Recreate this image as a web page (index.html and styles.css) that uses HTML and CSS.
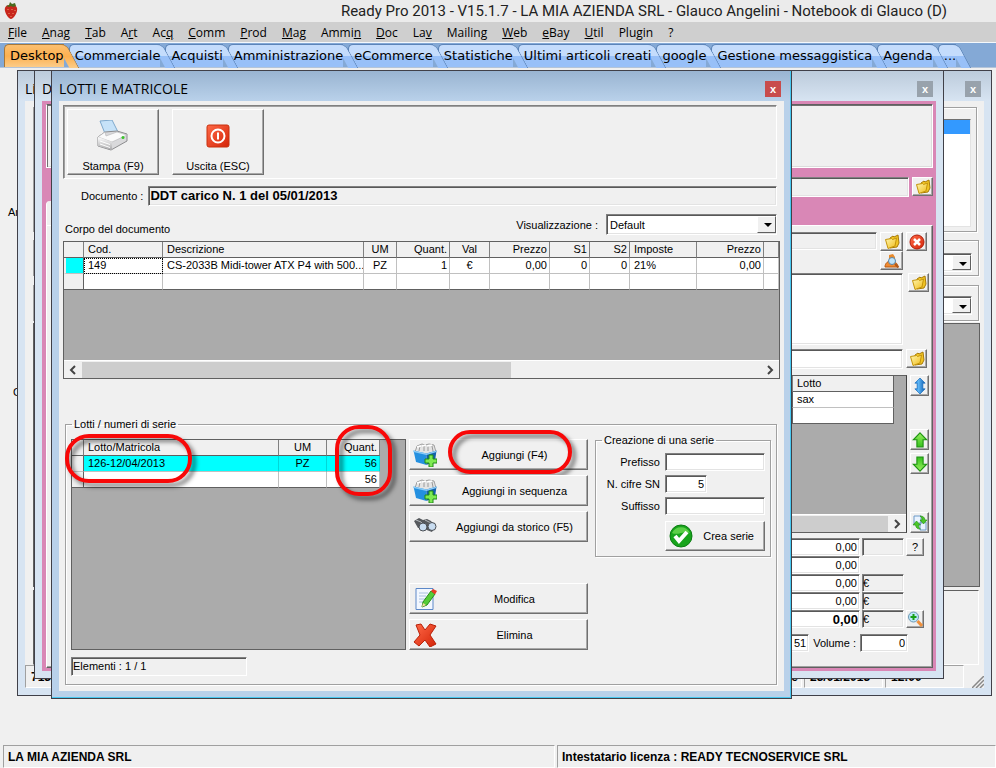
FILE: index.html
```html
<!DOCTYPE html>
<html lang="it">
<head>
  <meta charset="UTF-8">
  <meta name="viewport" content="width=device-width, initial-scale=1.0">
  <title>Ready Pro 2013</title>
  <link rel="stylesheet" href="styles.css">
</head>
<body>
  <!-- Shared icons -->
  <svg class="icon-defs" aria-hidden="true">
    <defs>
      <linearGradient id="gold" x1="0" y1="0" x2="1" y2="1"><stop offset="0" stop-color="#fff6b0"/><stop offset="1" stop-color="#f0bc18"/></linearGradient>
      <linearGradient id="blue" x1="0" y1="0" x2="1" y2="0"><stop offset="0" stop-color="#1d86e0"/><stop offset=".35" stop-color="#5cb4f4"/><stop offset="1" stop-color="#0d5cb0"/></linearGradient>
      <linearGradient id="green" x1="0" y1="0" x2="0" y2="1"><stop offset="0" stop-color="#9af060"/><stop offset="1" stop-color="#35c21c"/></linearGradient>
      <linearGradient id="red" x1="0" y1="0" x2="1" y2="1"><stop offset="0" stop-color="#ff6a48"/><stop offset="1" stop-color="#d42408"/></linearGradient>
      <linearGradient id="grey" x1="0" y1="0" x2="0" y2="1"><stop offset="0" stop-color="#ffffff"/><stop offset="1" stop-color="#a9a9ab"/></linearGradient>
    </defs>
    <symbol id="folder" viewBox="0 0 16 16">
      <path d="M6 4l3-2 1 1 4-2 1 8-2 4-7 1z" fill="#f0c424" stroke="#a87a08"/>
      <path d="M1.500 5.500l2.500 9 7-2.500 1.500-8-4 1.500-1-1z" fill="url(#gold)" stroke="#c4940c"/>
    </symbol>
    <symbol id="crate" viewBox="0 0 24 24">
      <path d="M2 9l2-6 5-2 3 1 4-1 5 1 2 7-10 3z" fill="#e4e4e4" stroke="#8c8c8c" stroke-width=".8"/>
      <path d="M7 3l-1 5M11 2v6M15 2v6M19 3l1 5" stroke="#9a9a9a" fill="none"/>
      <path d="M4 4l4-1M9 3l4-1M14 3l5-1" stroke="#fff" stroke-width="1.500" fill="none"/>
      <path d="M.500 7.500l13 3V22L3 19z" fill="#2490e0"/>
      <path d="M13.500 10.500l10-3L22 18l-8.500 4z" fill="#1260ac"/>
      <path d="M.500 7.500l13 3 10-3v1.500l-10 3-13-3z" fill="#8accf8"/>
      <path d="M16 12h4v4h4v4h-4v4h-4v-4h-4v-4h4z" fill="#7eea52" stroke="#1e8a16"/>
    </symbol>
    <symbol id="arrow" viewBox="0 0 14 14">
      <path d="M7 .800l5.800 6H9.700v6.200H4.300V6.800H1.200z" fill="url(#green)" stroke="#1e9412"/>
    </symbol>
  </svg>

  <!-- Title bar -->
  <header class="titlebar">
    <svg class="logo" viewBox="0 0 14 18">
      <path d="M7 4C3 2 0 5 1 9c1 4 4 8 6 8s5-4 6-8c1-4-2-7-6-5z" fill="#c8261c"/>
      <path d="M4 7v1M8 7v1M11 8v1M5 11v1M9 11v1M7 14v1" stroke="#f09a70" fill="none"/>
      <path d="M2 4l3-1 1-3 2 2 3-1 1 3-3 1-2-1-2 1z" fill="#4b6a1e"/>
    </svg>
    <span>Ready Pro 2013 - V15.1.7 - LA MIA AZIENDA SRL - Glauco Angelini - Notebook di Glauco (D)</span>
  </header>

  <!-- Menu -->
  <nav class="menubar">
    <a href="#"><u>F</u>ile</a>
    <a href="#"><u>A</u>nag</a>
    <a href="#"><u>T</u>ab</a>
    <a href="#">A<u>r</u>t</a>
    <a href="#">Ac<u>q</u></a>
    <a href="#"><u>C</u>omm</a>
    <a href="#"><u>P</u>rod</a>
    <a href="#"><u>M</u>ag</a>
    <a href="#">Ammi<u>n</u></a>
    <a href="#"><u>D</u>oc</a>
    <a href="#">La<u>v</u></a>
    <a href="#">Mailin<u>g</u></a>
    <a href="#"><u>W</u>eb</a>
    <a href="#"><u>e</u>Bay</a>
    <a href="#"><u>U</u>til</a>
    <a href="#">Plugin</a>
    <a href="#">?</a>
  </nav>

  <!-- Tabs -->
  <nav class="tabs">
    <button class="tab active"><span>Desktop</span></button>
    <button class="tab"><span>Commerciale</span></button>
    <button class="tab"><span>Acquisti</span></button>
    <button class="tab"><span>Amministrazione</span></button>
    <button class="tab"><span>eCommerce</span></button>
    <button class="tab"><span>Statistiche</span></button>
    <button class="tab"><span>Ultimi articoli creati</span></button>
    <button class="tab"><span>google</span></button>
    <button class="tab"><span>Gestione messaggistica</span></button>
    <button class="tab"><span>Agenda</span></button>
    <button class="tab"><span>...</span></button>
  </nav>

  <main class="desktop">
    <span class="desk-label desk-label-1">Ar</span>
    <span class="desk-label desk-label-2">C</span>

    <!-- Back window: list -->
    <section class="window window-list">
      <div class="window-title"><h2>Li</h2><button class="close" aria-label="Chiudi">x</button></div>
      <div class="window-body list-body">
        <div class="box box-list"><div class="listbox"><div class="selected"></div></div></div>
        <div class="box box-combo"><span class="combo"><select aria-label="Filtro"><option></option></select></span></div>
        <div class="box box-combo"><span class="combo"><select aria-label="Ordine"><option></option></select></span></div>
        <div class="list-grid"></div>
        <div class="list-panel"></div>
        <div class="list-status">
          <span class="cell grow"><b>713</b><b>Utente</b></span>
          <span class="cell date"><b>23/01/2013</b></span>
          <span class="cell time"><b>12:00</b></span>
          <svg class="grip" viewBox="0 0 12 12"><path d="M0 12L12 0M4 12l8-8M8 12l4-4" stroke="#888" stroke-width="1.500"/></svg>
        </div>
      </div>
    </section>

    <!-- Middle window: document -->
    <section class="window window-doc">
      <div class="window-title"><h2>D</h2><button class="close" aria-label="Chiudi">x</button></div>
      <div class="window-body doc-body">
        <div class="doc-toolbar"></div>
        <div class="doc-row doc-head">
          <input class="field flat" type="text" aria-label="Intestatario" readonly>
          <button class="btn" aria-label="Apri"><svg><use href="#folder"/></svg></button>
        </div>
        <div class="doc-tab"></div>
        <div class="doc-panel">
          <div class="doc-row pad-5">
            <input class="field flat" type="text" aria-label="Cliente" readonly>
            <button class="btn wide" aria-label="Apri cliente"><svg><use href="#folder"/></svg></button>
            <button class="btn" aria-label="Rimuovi"><svg viewBox="0 0 16 16"><circle cx="8" cy="8" r="7" fill="url(#red)" stroke="#b01c08"/><path d="M5 5l6 6M11 5l-6 6" stroke="#fff" stroke-width="2.500"/></svg></button>
          </div>
          <div class="doc-row pad-29">
            <button class="btn wide" aria-label="Cerca cliente"><svg viewBox="0 0 16 16"><path d="M5 2l4-1 2 3v4H5z" fill="#e88a2c"/><path d="M1 14c0-4 3-6 6-6s7 2 7 6z" fill="#f08a30" stroke="#b85810"/><circle cx="8" cy="8" r="3.500" fill="#bfe4fa" stroke="#5a84a4"/><path d="M11 11l3.500 3.500" stroke="#b05818" stroke-width="2"/></svg></button>
          </div>
          <div class="doc-row notes pad-3">
            <textarea class="field" aria-label="Note"></textarea>
            <button class="btn" aria-label="Apri note"><svg><use href="#folder"/></svg></button>
          </div>
          <div class="doc-row dest pad-5">
            <input class="field" type="text" aria-label="Destinazione">
            <button class="btn" aria-label="Apri destinazione"><svg><use href="#folder"/></svg></button>
          </div>
          <div class="doc-row lines pad-3">
            <div class="doc-grid">
              <table>
                <thead><tr><th></th><th>Lotto</th></tr></thead>
                <tbody><tr><td></td><td>sax</td></tr><tr><td></td><td></td></tr></tbody>
              </table>
              <div class="scrollbar"><span class="thumb"></span><svg viewBox="0 0 8 10"><path d="M2 1l4 4-4 4" fill="none" stroke="#444" stroke-width="2"/></svg></div>
            </div>
            <div class="doc-side">
              <button class="btn" aria-label="Ridimensiona"><svg viewBox="0 0 14 14"><path d="M7 0l4.500 4.500H9.500v5h2L7 14 2.500 9.500h2v-5h-2z" fill="url(#blue)" stroke="#1468b8" stroke-width=".6"/></svg></button>
              <button class="btn up" aria-label="Sposta su"><svg><use href="#arrow"/></svg></button>
              <button class="btn" aria-label="Sposta giù"><svg class="flip"><use href="#arrow"/></svg></button>
              <button class="btn last" aria-label="Aggiorna"><svg viewBox="0 0 16 16"><path d="M2 1h7v8H2zM8 7h6v8H8z" fill="#e9f3ff" stroke="#6c9ac8"/><path d="M4.500 6l4 4H6.500c0 2 .500 3 2 4-3 0-4.500-1-5-4H1z" fill="#4cc828" stroke="#1e8a12" stroke-width=".6"/><path d="M11.500 9l-3.500-4h2c0-2-.500-3-2-4 3 0 4.500 1 5 4h2z" fill="#4cc828" stroke="#1e8a12" stroke-width=".6"/></svg></button>
            </div>
          </div>
          <div class="totals">
            <input class="field" type="text" value="0,00" aria-label="Spese"><input class="field flat" type="text" aria-label="Valuta spese"><button class="btn" aria-label="Aiuto">?</button>
            <input class="field" type="text" value="0,00" aria-label="Sconto"><span></span><span></span>
            <input class="field" type="text" value="0,00" aria-label="Imponibile"><input class="field flat" type="text" value="€" aria-label="Valuta imponibile"><span></span>
            <input class="field" type="text" value="0,00" aria-label="Imposta"><input class="field flat" type="text" value="€" aria-label="Valuta imposta"><span></span>
            <input class="field strong" type="text" value="0,00" aria-label="Totale"><input class="field flat" type="text" value="€" aria-label="Valuta totale"><button class="btn" aria-label="Dettaglio totale"><svg viewBox="0 0 16 16"><circle cx="6.500" cy="6" r="5" fill="#bfe8fa" stroke="#6c98b4"/><path d="M6.500 3v6M3.500 6h6" stroke="#18a018" stroke-width="2"/><path d="M10.500 10l4.500 5" stroke="#f0903c" stroke-width="3"/></svg></button>
          </div>
          <div class="doc-row volume">
            <input class="field" type="text" value="51" aria-label="Peso">
            <label for="volume">Volume :</label>
            <input class="field small" id="volume" type="text" value="0">
          </div>
        </div>
      </div>
    </section>

    <!-- Front window: lots and serial numbers -->
    <section class="window window-lots">
      <div class="window-title"><h1>LOTTI E MATRICOLE</h1><button class="close" aria-label="Chiudi">x</button></div>
      <div class="window-body lots-body">
        <div class="toolbar">
          <button class="btn tool">
            <svg viewBox="0 0 32 32">
              <path d="M3 1l12-1 6 12-12 4z" fill="#c6e2f8" stroke="#7ea8cc"/>
              <path d="M1 17l7-5 12-1 10 3v7L14 30 1 26z" fill="#d9d9db" stroke="#8c8c8e"/>
              <path d="M1 17l7-5 1 4 11-4 10 3-15 7z" fill="#fafafa" stroke="#b4b4b6" stroke-width=".6"/>
              <path d="M1 17l14 5v8L1 26z" fill="url(#grey)"/>
              <path d="M3 21l10 3.500M3 24l10 3.500" stroke="#fff" fill="none"/>
              <circle cx="26" cy="17.500" r="1.500" fill="#3ac42a"/>
            </svg>
            <span>Stampa (F9)</span>
          </button>
          <button class="btn tool">
            <svg viewBox="0 0 32 32">
              <rect x="5" y="5" width="22" height="22" rx="2" fill="url(#red)" stroke="#c8300e"/>
              <circle cx="16" cy="16" r="6.500" fill="none" stroke="#fff" stroke-width="2"/>
              <path d="M16 12.500v7" stroke="#fff" stroke-width="2"/>
            </svg>
            <span>Uscita (ESC)</span>
          </button>
        </div>

        <div class="document-row">
          <label for="documento">Documento :</label>
          <input class="field flat strong" id="documento" type="text" value="DDT carico N. 1 del 05/01/2013" readonly>
        </div>

        <div class="view-row">
          <span class="caption">Corpo del documento</span>
          <label for="vista">Visualizzazione :</label>
          <span class="combo"><select id="vista"><option>Default</option></select></span>
        </div>

        <div class="grid lines-grid">
          <table>
            <thead>
              <tr><th></th><th>Cod.</th><th>Descrizione</th><th class="mid">UM</th><th class="num">Quant.</th><th class="mid">Val</th><th class="num">Prezzo</th><th class="num">S1</th><th class="num">S2</th><th>Imposte</th><th class="num">Prezzo</th><th></th></tr>
            </thead>
            <tbody>
              <tr><td class="marker"></td><td class="focus">149</td><td>CS-2033B Midi-tower ATX P4 with 500...</td><td class="mid">PZ</td><td class="num">1</td><td class="mid">€</td><td class="num">0,00</td><td class="num">0</td><td class="num">0</td><td>21%</td><td class="num">0,00</td><td></td></tr>
              <tr><td></td><td></td><td></td><td></td><td></td><td></td><td></td><td></td><td></td><td></td><td></td><td></td></tr>
            </tbody>
          </table>
          <div class="scrollbar">
            <svg viewBox="0 0 8 10"><path d="M6 1L2 5l4 4" fill="none" stroke="#444" stroke-width="2"/></svg>
            <span class="thumb"></span>
            <svg viewBox="0 0 8 10"><path d="M2 1l4 4-4 4" fill="none" stroke="#444" stroke-width="2"/></svg>
          </div>
        </div>

        <fieldset class="lots">
          <legend>Lotti / numeri di serie</legend>
          <div class="lots-left">
            <div class="grid lots-grid">
              <table>
                <thead><tr><th></th><th>Lotto/Matricola</th><th class="mid">UM</th><th class="num">Quant.</th></tr></thead>
                <tbody>
                  <tr class="current"><td></td><td>126-12/04/2013</td><td class="mid">PZ</td><td class="num">56</td></tr>
                  <tr><td></td><td></td><td></td><td class="num">56</td></tr>
                </tbody>
              </table>
              <span class="callout callout-lot"></span>
              <span class="callout callout-qty"></span>
            </div>
            <div class="count">Elementi : 1 / 1</div>
          </div>

          <div class="actions">
            <button class="btn action"><svg><use href="#crate"/></svg><span>Aggiungi (F4)</span><i class="callout callout-add"></i></button>
            <button class="btn action"><svg><use href="#crate"/></svg><span>Aggiungi in sequenza</span></button>
            <button class="btn action">
              <svg viewBox="0 0 24 24"><path d="M1 6l5-3 4 2 4-1 4 2 4 5-3 6-8-3-6-1z" fill="#55585c"/><path d="M3 5l5 2 4 5M12 5l6 3" stroke="#b4b8bc" fill="none"/><circle cx="10" cy="12" r="4" fill="#c8dcf0" stroke="#4a4e54"/><circle cx="19" cy="11.500" r="4" fill="#c8dcf0" stroke="#4a4e54"/></svg>
              <span>Aggiungi da storico (F5)</span>
            </button>
            <button class="btn action spaced">
              <svg viewBox="0 0 24 24"><path d="M3 1.500h17v21H3z" fill="#f2f7ff" stroke="#5c88c8"/><path d="M6 6h9M6 9h7M6 12h6M6 15h4" stroke="#a8c0e0"/><path d="M9 20l1-5 8-11 4 3-8 11z" fill="#54cc38" stroke="#2a8a1c"/><path d="M18 4l2-2 4 2-2 3.500z" fill="#e83c24"/><path d="M9 20l1-4 3 2z" fill="#f6dca4"/></svg>
              <span>Modifica</span>
            </button>
            <button class="btn action">
              <svg viewBox="0 0 24 24"><path d="M3 2l5-1 4 6 5-6 6 2-6 9 6 9-6 3-5-7-6 6-5-4 6-7z" fill="url(#red)" stroke="#b82008"/></svg>
              <span>Elimina</span>
            </button>
          </div>

          <fieldset class="series">
            <legend>Creazione di una serie</legend>
            <label for="prefisso">Prefisso</label><input class="field" id="prefisso" type="text">
            <label for="cifre">N. cifre SN</label><input class="field digits" id="cifre" type="text" value="5">
            <label for="suffisso">Suffisso</label><input class="field" id="suffisso" type="text">
            <button class="btn create">
              <svg viewBox="0 0 24 24"><circle cx="12" cy="12" r="11" fill="#18a41c" stroke="#0c7c12"/><path d="M3 9a10 10 0 0 1 18 0c-6-3-12 3-18 0z" fill="#5cd048"/><path d="M6 12l4 5 8-9" fill="none" stroke="#fff" stroke-width="4"/></svg>
              <span>Crea serie</span>
            </button>
          </fieldset>
        </fieldset>
      </div>
    </section>
  </main>

  <!-- Status bar -->
  <footer class="statusbar">
    <span>LA MIA AZIENDA SRL</span>
    <span>Intestatario licenza : READY TECNOSERVICE SRL</span>
  </footer>
</body>
</html>
```

FILE: styles.css
```css
/* General Styles */
* {
  box-sizing: border-box;
}

body {
  margin: 0;
  min-height: 100vh;
  display: flex;
  flex-direction: column;
  background-color: #f0f0f0;
  color: #000;
  font-family: "Liberation Sans", Arial, sans-serif;
  font-size: 11px;
  line-height: 14px;
}

button,
input,
select,
textarea {
  font: inherit;
  color: inherit;
  margin: 0;
}

.icon-defs {
  position: absolute;
  width: 0;
  height: 0;
}

/* Title Bar */
.titlebar {
  display: flex;
  align-items: center;
  justify-content: space-between;
  height: 22px;
  padding: 0 49px 0 4px;
  background-color: #ebebeb;
  color: #222;
  font-family: Roboto, "Open Sans", sans-serif;
  font-size: 15px;
  line-height: 22px;
  white-space: nowrap;
}

.logo {
  width: 14px;
  height: 18px;
}

/* Menu */
.menubar {
  display: flex;
  gap: 15px;
  height: 21px;
  padding-left: 8px;
  background-color: #cfcfcf;
  border-bottom: 1px solid #f4f8fc;
  font-family: "Open Sans", "Noto Sans", sans-serif;
  font-size: 12px;
  line-height: 21px;
}

.menubar a {
  color: #000;
  text-decoration: none;
}

/* Tabs */
.tabs {
  display: flex;
  gap: 5px;
  height: 25px;
  padding: 1px 0 0 4px;
  background-color: #84a9d6;
  border-bottom: 1px solid #b4c4d8;
}

.tab {
  position: relative;
  padding: 0 0 0 5px;
  border: 1px solid #5c84b8;
  border-width: 1px 0 0 1px;
  border-radius: 5px 0 0 0;
  background: linear-gradient(#c4dcfc 50%, #98c0f8 50%);
  font-family: "DejaVu Sans", sans-serif;
  font-size: 13px;
  line-height: 22px;
  white-space: nowrap;
}

.tab span {
  position: relative;
  z-index: 2;
}

/* slanted right edge of the tab */
.tab::after {
  content: "";
  position: absolute;
  z-index: 1;
  top: -1px;
  right: -9px;
  width: 14px;
  height: 23px;
  border: 1px solid #5c84b8;
  border-width: 1px 1px 0 0;
  border-radius: 0 6px 0 0;
  background: linear-gradient(#c4dcfc 50%, #98c0f8 50%);
  transform: skewX(28deg);
  clip-path: inset(0 0 0 5px);
}

.tab.active,
.tab.active::after {
  background: linear-gradient(#fcc070, #fcb050 50%, #fccc88);
  border-color: #a87838;
}

/* Desktop and windows */
.desktop {
  position: relative;
  flex: 1;
  min-height: 677px;
  overflow: hidden;
}

.desk-label {
  position: absolute;
}

.desk-label-1 {
  left: 8px;
  top: 137px;
}

.desk-label-2 {
  left: 13px;
  top: 317px;
}

.window {
  position: absolute;
  top: 2px;
  display: flex;
  flex-direction: column;
  padding: 0 7px 7px;
  border: 1px solid #404048;
  background: linear-gradient(#bccbdb, #d7e4f2 30px);
}

.window-list {
  left: 17px;
  right: 4px;
  bottom: 49px;
}

.window-doc {
  left: 34px;
  right: 52px;
  bottom: 66px;
}

.window-lots {
  left: 51px;
  right: 204px;
  bottom: 46px;
  background: linear-gradient(#99b4d1, #b9d1ea 30px);
  box-shadow: inset -1px -1px #48c8f0;
}

.window-title {
  display: flex;
  align-items: center;
  justify-content: space-between;
  flex: none;
  height: 30px;
  padding: 6px 3px 0 0;
}

.window-title h1,
.window-title h2 {
  margin: 0;
  font-family: "Open Sans", "Noto Sans", sans-serif;
  font-size: 14px;
  font-weight: normal;
  line-height: 20px;
}

.close {
  width: 16px;
  height: 16px;
  padding: 0;
  border: 0;
  background-color: #98a2ac;
  color: #fff;
  font-weight: bold;
  line-height: 14px;
}

.window-lots .close {
  background-color: #c84c4c;
}

.window-body {
  display: flex;
  flex-direction: column;
  flex: 1;
  min-height: 0;
  background-color: #f0f0f0;
}

/* Controls */
.field {
  width: 100%;
  min-width: 0;
  height: 18px;
  padding: 0 2px;
  border: 1px solid;
  border-color: #808080 #fff #fff #808080;
  border-radius: 0;
  background-color: #fff;
  box-shadow: inset 1px 1px #585858, inset -1px -1px #e3e3e3;
  outline: none;
}

.field.flat {
  background-color: #f0f0f0;
}

.field.strong {
  padding: 0 1px;
  font-size: 13px;
  font-weight: bold;
}

.btn {
  display: flex;
  align-items: center;
  justify-content: center;
  flex: none;
  padding: 0;
  border: 1px solid;
  border-color: #fff #707070 #707070 #fff;
  background-color: #f0f0f0;
  box-shadow: inset -1px -1px #a8a8a8;
}

.combo {
  position: relative;
  display: flex;
  height: 21px;
}

.combo select {
  width: 100%;
  padding: 0 3px;
  appearance: none;
  border: 1px solid;
  border-color: #808080 #fff #fff #808080;
  border-radius: 0;
  background-color: #fff;
  box-shadow: inset 1px 1px #585858, inset -1px -1px #e3e3e3;
}

.combo::before {
  content: "";
  position: absolute;
  top: 2px;
  right: 1px;
  bottom: 2px;
  width: 17px;
  border: 1px solid;
  border-color: #fff #606060 #606060 #fff;
  background-color: #f0f0f0;
  pointer-events: none;
}

.combo::after {
  content: "";
  position: absolute;
  top: 9px;
  right: 5px;
  border: 4px solid transparent;
  border-top-color: #000;
  border-bottom: 0;
  pointer-events: none;
}

.scrollbar {
  display: flex;
  align-items: center;
  height: 18px;
  margin-top: auto;
  background-color: #f0f0f0;
  border-top: 1px solid #fff;
}

.scrollbar svg {
  width: 18px;
  height: 10px;
}

.scrollbar .thumb {
  height: 16px;
  background-color: #cdcdcd;
}

/* Tables */
table {
  width: 100%;
  table-layout: fixed;
  border-collapse: separate;
  border-spacing: 0;
}

th,
td {
  height: 16px;
  padding: 0 0 0 4px;
  border-right: 1px solid #c0c0c0;
  border-bottom: 1px solid #c0c0c0;
  background-color: #fff;
  font-weight: normal;
  line-height: 15px;
  text-align: left;
  white-space: nowrap;
  overflow: hidden;
}

th {
  background-color: #f0f0f0;
  border-right-color: #808080;
  border-bottom-color: #606060;
}

td:first-child {
  background-color: #f0f0f0;
  border-right-color: #606060;
}

tbody tr:last-child td {
  border-bottom-color: #606060;
}

.mid {
  padding: 0;
  text-align: center;
}

.num {
  padding: 0 2px 0 0;
  text-align: right;
}

.grid {
  display: flex;
  flex-direction: column;
  border: 1px solid #606060;
  background-color: #ababab;
}

/* List window */
.list-body {
  padding: 6px 0 0 8px;
}

.box {
  border: 1px solid #a0a0a0;
  box-shadow: inset 1px 1px #fff, 1px 1px #fff;
}

.box-list {
  height: 125px;
  margin-right: 7px;
  padding: 11px 5px 4px;
}

.listbox {
  height: 108px;
  border: 1px solid;
  border-color: #707070 #e3e3e3 #e3e3e3 #707070;
  background-color: #fff;
}

.listbox .selected {
  height: 14px;
  background-color: #3399ff;
}

.box-combo {
  height: 36px;
  margin: 8px 5px 0 0;
  padding: 12px 6px 0;
}

.box-combo + .box-combo {
  margin-top: 9px;
  padding-top: 10px;
}

.box-combo .combo {
  height: 19px;
}

.list-grid {
  flex: 1;
  margin: 2px 4px 0 0;
  border: 1px solid #606060;
  background-color: #ababab;
}

.list-panel {
  height: 75px;
  margin: 3px 5px 0 0;
  border: 1px solid;
  border-color: #606060 #fff #fff #606060;
}

.list-status {
  display: flex;
  gap: 2px;
  height: 23px;
  margin-left: -8px;
}

.list-status .cell {
  display: flex;
  justify-content: space-between;
  padding: 4px 3px 0 5px;
  border: 1px solid;
  border-color: #a0a0a0 #fff #fff #a0a0a0;
  font-size: 12px;
}

.list-status .grow {
  flex: 1;
}

.list-status .date,
.list-status .time {
  width: 79px;
}

.grip {
  width: 12px;
  height: 12px;
  margin: 11px 0 0 6px;
}

/* Document window */
.window-body.doc-body {
  padding: 3px 3px 3px 4px;
  background-color: #d987b6;
}

.doc-toolbar {
  height: 64px;
  border: 1px solid #fff;
  border-top-color: #606060;
  background-color: #f0f0f0;
  box-shadow: inset 1px 1px #707070, inset -1px -1px #dcdcdc;
}

.doc-row {
  display: flex;
  justify-content: flex-end;
  align-items: flex-start;
  gap: 3px;
  padding-left: 8px;
}

.doc-row .btn {
  width: 21px;
  height: 19px;
}

.doc-row .btn.wide {
  width: 23px;
}

.btn svg {
  width: 16px;
  height: 16px;
}

.doc-head {
  height: 20px;
  margin-top: 9px;
}

.doc-head .field,
.dest .field {
  height: 20px;
}

.doc-tab {
  width: 120px;
  height: 24px;
  margin-top: 4px;
  border-left: 1px solid #fff;
  border-radius: 4px 4px 0 0;
  background-color: #f0f0f0;
}

.doc-panel {
  flex: 1;
  padding-top: 6px;
  border: 1px solid;
  border-color: #fff #606060 #606060 #fff;
  background-color: #f0f0f0;
  box-shadow: inset -1px -1px #a0a0a0;
}

.pad-3 {
  padding-right: 3px;
}

.pad-5 {
  padding-right: 5px;
}

.pad-29 {
  padding-right: 29px;
}

.notes {
  gap: 5px;
  margin-top: 3px;
}

.notes .field {
  height: 72px;
  resize: none;
}

.dest {
  margin-top: 4px;
}

.lines {
  align-items: stretch;
  height: 158px;
  margin-top: 6px;
}

.doc-grid {
  display: flex;
  flex-direction: column;
  flex: 1;
  border: 1px solid #606060;
  border-right-color: #404040;
  background-color: #ababab;
}

.doc-grid table {
  width: auto;
  margin-right: 12px;
}

.doc-grid th:last-child,
.doc-grid td:last-child {
  width: 101px;
  border-right-color: #606060;
}

.doc-grid .thumb {
  flex: 1;
}

.doc-side {
  display: flex;
  flex-direction: column;
  gap: 3px;
}

.doc-row .doc-side .btn {
  width: 19px;
  height: 21px;
}

.doc-side .up {
  margin-top: 30px;
}

.doc-side .last {
  margin-top: auto;
}

.flip {
  transform: rotate(180deg);
}

.totals {
  display: grid;
  grid-template-columns: 1fr 42px 18px;
  gap: 0 2px;
  margin-top: 5px;
  padding: 0 8px;
}

.totals .field:not(.flat),
.volume .field {
  text-align: right;
}

.totals .field.flat {
  padding-left: 0;
}

.totals .btn {
  width: 18px;
  height: 18px;
}

.volume {
  align-items: center;
  gap: 4px;
  margin-top: 6px;
  padding-right: 24px;
}

.volume label {
  flex: none;
}

.volume .small {
  flex: none;
  width: 48px;
}

/* Lots window */
.lots-body {
  padding: 4px 7px 6px 4px;
}

.toolbar {
  display: flex;
  gap: 13px;
  height: 74px;
  padding: 3px;
  border: 1px solid;
  border-color: #808080 #fff #fff #808080;
  box-shadow: inset 1px 1px #a0a0a0;
}

.tool {
  flex-direction: column;
  justify-content: flex-end;
  gap: 7px;
  width: 92px;
  padding-bottom: 1px;
}

.tool svg {
  width: 32px;
  height: 32px;
}

.document-row {
  display: flex;
  align-items: center;
  gap: 5px;
  margin-top: 7px;
  padding-left: 18px;
}

.document-row .field {
  height: 20px;
}

.document-row label {
  flex: none;
}

.view-row {
  display: flex;
  align-items: center;
  gap: 8px;
  margin-top: 8px;
  padding-left: 2px;
}

.view-row .caption {
  margin-right: auto;
  padding-top: 8px;
}

.view-row .combo {
  width: 171px;
}

.lines-grid {
  height: 139px;
  margin: 5px -3px 0 0;
}

.lines-grid th:nth-child(1) { width: 20px; }
.lines-grid th:nth-child(2) { width: 79px; }
.lines-grid th:nth-child(3) { width: 201px; }
.lines-grid th:nth-child(4) { width: 33px; }
.lines-grid th:nth-child(5) { width: 53px; }
.lines-grid th:nth-child(6) { width: 40px; }
.lines-grid th:nth-child(7) { width: 60px; }
.lines-grid th:nth-child(8) { width: 40px; }
.lines-grid th:nth-child(9) { width: 40px; }
.lines-grid th:nth-child(10) { width: 67px; }
.lines-grid th:nth-child(11) { width: 67px; }

.lines-grid td.marker {
  background-color: #00ffff;
  border-left: 2px solid #f0f0f0;
}

.lines-grid td.focus {
  outline: 1px dotted #000;
  outline-offset: -1px;
}

.lines-grid .thumb {
  width: 60%;
  margin-right: auto;
}

fieldset {
  margin: 0;
  border: 1px solid #a0a0a0;
  box-shadow: inset 1px 1px #fff, 1px 1px #fff;
}

legend {
  padding: 0 2px;
}

.lots {
  display: flex;
  flex: 1;
  gap: 3px;
  min-width: 0;
  margin: 38px 0 0 2px;
  padding: 8px 5px 8px;
}

.lots legend {
  margin-left: 1px;
}

.lots-left {
  flex: 1;
}

.lots-grid {
  position: relative;
  height: 211px;
}

.lots-grid table {
  width: calc(100% - 25px);
}

.lots-grid th:nth-child(1) { width: 12px; }
.lots-grid th:nth-child(3) { width: 48px; }
.lots-grid th:nth-child(4) { width: 53px; }

.current td:not(:first-child) {
  background-color: #00ffff;
  border-right-color: #00d8d8;
}

.count {
  width: 176px;
  height: 19px;
  margin-top: 7px;
  padding: 1px 1px;
  border: 1px solid;
  border-color: #808080 #fff #fff #808080;
  box-shadow: inset 1px 1px #585858;
}

.actions {
  display: flex;
  flex-direction: column;
  gap: 5px;
  width: 179px;
}

.action {
  position: relative;
  height: 31px;
  padding: 0 3px;
}

.action svg,
.create svg {
  flex: none;
  width: 24px;
  height: 24px;
}

.action span {
  flex: 1;
  padding-left: 8px;
}

.action.spaced {
  margin-top: 36px;
}

.series {
  display: grid;
  grid-template-columns: 64px 100px;
  align-content: start;
  align-items: center;
  gap: 4px 5px;
  width: 176px;
  height: 124px;
  margin: -6px 0 0 4px;
  padding: 6px 0 0;
}

.series legend {
  margin-left: 6px;
}

.series label {
  text-align: right;
}

.series .digits {
  width: 42px;
  text-align: right;
}

.create {
  grid-column: 2;
  height: 30px;
  padding: 0 3px;
  margin-top: 2px;
}

.create span {
  flex: 1;
  text-align: right;
  padding-right: 7px;
}

/* Red marks over the lot, the quantity and the add button */
.callout {
  position: absolute;
  border: 4px solid #f80808;
  border-radius: 24px;
  filter: drop-shadow(4px 4px 2px rgba(0, 0, 0, 0.5));
  pointer-events: none;
}

.callout-lot {
  left: -7px;
  top: -6px;
  width: 127px;
  height: 49px;
}

.callout-qty {
  top: -15px;
  right: 13px;
  width: 57px;
  height: 71px;
}

.callout-add {
  left: 38px;
  top: -10px;
  width: 124px;
  height: 44px;
}

/* Status Bar */
.statusbar {
  display: grid;
  grid-template-columns: 552px 1fr;
  gap: 2px;
  height: 23px;
  padding-left: 3px;
  font-size: 12px;
  font-weight: bold;
}

.statusbar span {
  padding: 4px 4px 0;
  border: 1px solid;
  border-color: #a0a0a0 #fff #fff #a0a0a0;
}
```
